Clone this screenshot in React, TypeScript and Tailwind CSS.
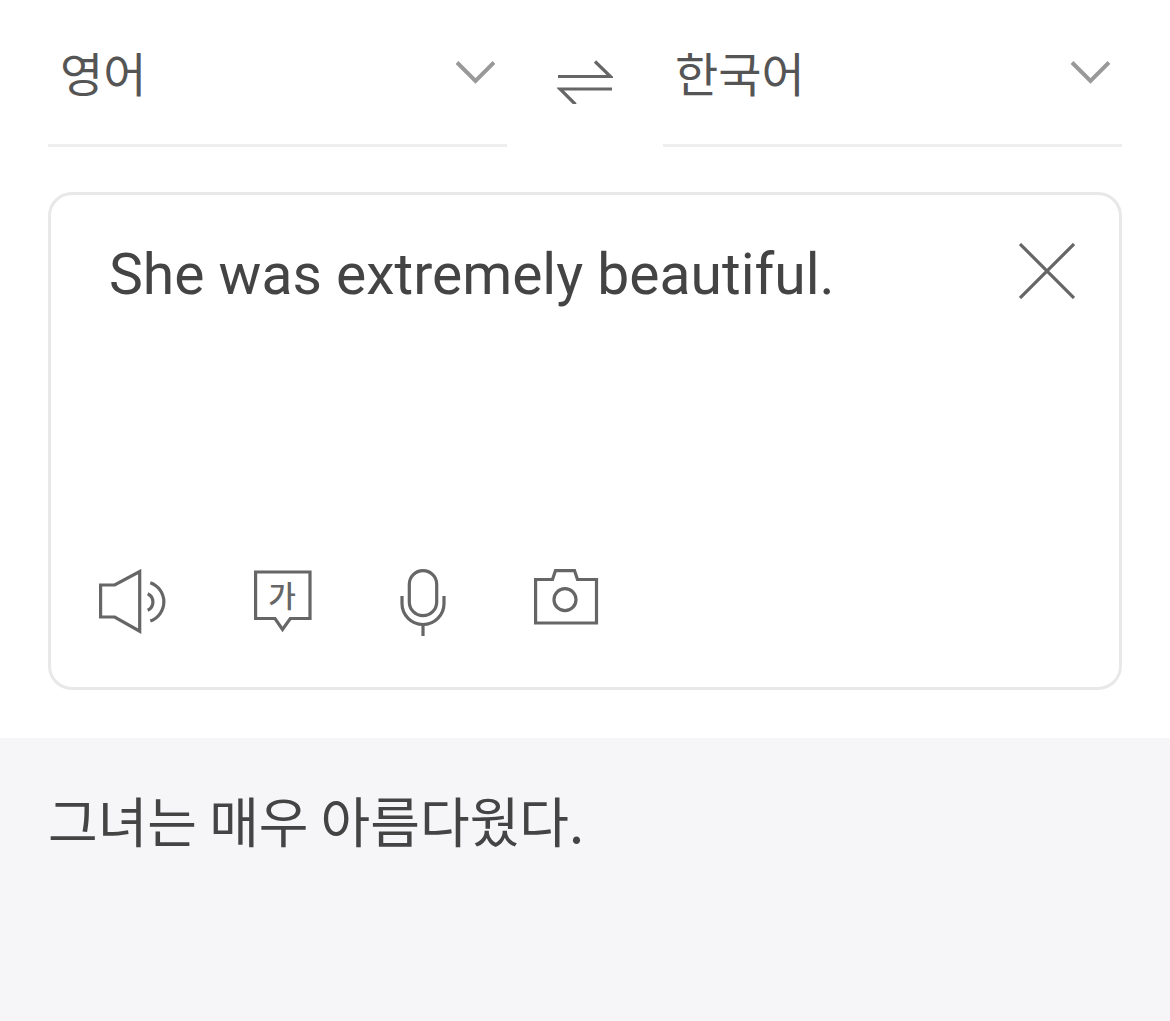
import { useState } from "react";

const SOURCE_LANGUAGES = ["영어", "한국어", "일본어", "중국어"];
const TARGET_LANGUAGES = ["한국어", "영어", "일본어", "중국어"];

interface LanguageSelectProps {
  label: string;
  value: string;
  options: string[];
  onChange: (value: string) => void;
}

function LanguageSelect({ label, value, options, onChange }: LanguageSelectProps) {
  return (
    <div className="flex-1 min-w-0 grid items-center border-b-3 border-[#eeeeef]">
      <select
        aria-label={label}
        value={value}
        onChange={(e) => onChange(e.target.value)}
        className="col-start-1 row-start-1 w-full h-36 appearance-none bg-transparent pl-3 pr-16 font-['Noto_Sans_CJK_KR',sans-serif] text-[47px] text-[#555556] outline-none"
      >
        {options.map((option) => (
          <option key={option}>{option}</option>
        ))}
      </select>
      <svg
        className="col-start-1 row-start-1 justify-self-end mr-3 pointer-events-none"
        width="40"
        height="24"
        viewBox="0 0 40 24"
        fill="none"
        stroke="#999999"
        strokeWidth="4"
      >
        <path d="M2 2.5 L20.5 21 L39 2.5" />
      </svg>
    </div>
  );
}

const iconProps = { fill: "none", stroke: "#666666", strokeWidth: 3.2, className: "block" };

function SwapIcon() {
  return (
    <svg {...iconProps} width="56" height="44" viewBox="0 0 56 44">
      <path d="M1 16.5 H53.5 L38 1.5" />
      <path d="M55 29 H3 L18.5 44.5" />
    </svg>
  );
}

function CloseIcon() {
  return (
    <svg {...iconProps} width="56" height="56" viewBox="0 0 56 56">
      <path d="M1 1 L55 55 M55 1 L1 55" />
    </svg>
  );
}

function SpeakerIcon() {
  return (
    <svg {...iconProps} width="67" height="67" viewBox="0 0 67 67">
      <path d="M1.6 16 H15.7 L40.7 2.5 V62.2 L15.7 48 H1.6 Z" />
      <path d="M48.7 24.7 A9.2 9.2 0 0 1 48.7 41.3" />
      <path d="M51.3 13.7 A20.3 20.3 0 0 1 51.3 52" />
    </svg>
  );
}

function PronunciationIcon() {
  return (
    <svg {...iconProps} width="58" height="67" viewBox="0 0 58 67">
      <path d="M1.6 3 H56 V49.5 H36.3 L28.5 60.5 L21 49.5 H1.6 Z" />
      <text x="28" y="38" textAnchor="middle" fontSize="30" fontWeight="500" fill="#666666" stroke="none">가</text>
    </svg>
  );
}

function MicIcon() {
  return (
    <svg {...iconProps} width="46" height="67" viewBox="0 0 46 67">
      <rect x="9.3" y="1.6" width="27.4" height="45" rx="13.7" />
      <path d="M2 27 V34.5 A21 21 0 0 0 44 34.5 V27" />
      <path d="M23 55.5 V67" />
    </svg>
  );
}

function CameraIcon() {
  return (
    <svg {...iconProps} width="66" height="67" viewBox="0 0 66 67">
      <path d="M1.6 10.5 H18.5 L21.5 1.6 H40.5 L43.5 10.5 H62.5 V54 H1.6 Z" />
      <circle cx="31" cy="30.7" r="11" />
    </svg>
  );
}

export default function App() {
  const [source, setSource] = useState("영어");
  const [target, setTarget] = useState("한국어");
  const [text, setText] = useState("She was extremely beautiful.");

  const swapLanguages = () => {
    setSource(target);
    setTarget(source);
  };

  return (
    <div className="min-h-screen flex flex-col bg-white font-['Roboto','Noto_Sans_CJK_KR',sans-serif]">
      <header className="flex px-12">
        <LanguageSelect label="출발 언어" value={source} options={SOURCE_LANGUAGES} onChange={setSource} />
        <button type="button" aria-label="언어 바꾸기" onClick={swapLanguages} className="w-39 flex justify-center items-center pt-4">
          <SwapIcon />
        </button>
        <LanguageSelect label="도착 언어" value={target} options={TARGET_LANGUAGES} onChange={setTarget} />
      </header>

      <main className="flex-1 flex flex-col">
        <div className="mx-12 mt-[45px] mb-12 rounded-3xl border-3 border-[#e8e8e9] pt-11 pb-[51px]">
          <div className="flex items-start pl-[58px] pr-11 mb-[42px]">
            <textarea
              aria-label="번역할 내용"
              rows={4}
              value={text}
              onChange={(e) => setText(e.target.value)}
              className="flex-1 min-w-0 block resize-none text-[57px] leading-[72px] text-[#444445] outline-none"
            />
            <button type="button" aria-label="지우기" onClick={() => setText("")} className="pt-1">
              <CloseIcon />
            </button>
          </div>
          <div className="flex gap-22 pl-12">
            <button type="button" aria-label="듣기"><SpeakerIcon /></button>
            <button type="button" aria-label="발음"><PronunciationIcon /></button>
            <button type="button" aria-label="음성 입력"><MicIcon /></button>
            <button type="button" aria-label="이미지 번역"><CameraIcon /></button>
          </div>
        </div>

        <section className="flex-1 bg-[#f6f6f9] px-12 py-[46px]">
          <p className="font-['Noto_Sans_CJK_KR',sans-serif] text-[54px] leading-[72px] text-[#444445]">그녀는 매우 아름다웠다.</p>
        </section>
      </main>
    </div>
  );
}
